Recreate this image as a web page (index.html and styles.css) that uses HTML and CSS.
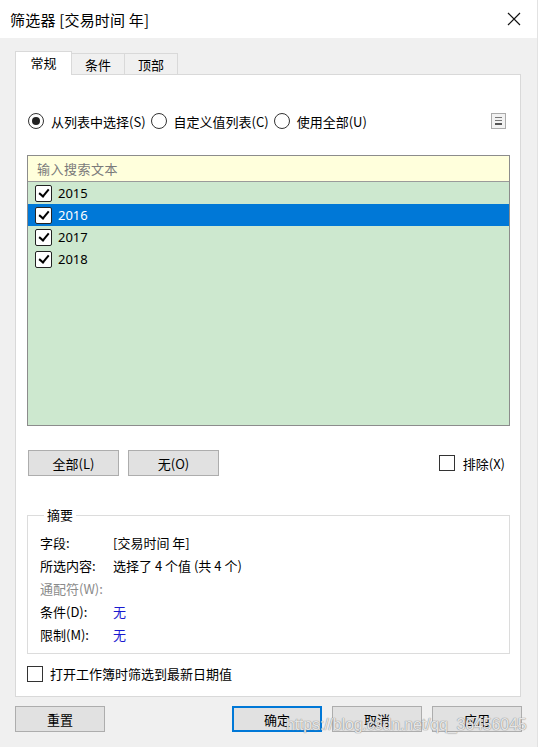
FILE: index.html
```html
<!DOCTYPE html>
<html>
<head>
<meta charset="utf-8">
<link rel="stylesheet" href="styles.css">
</head>
<body>
<div class="window">
  <div class="titlebar">
    <span class="title">筛选器 [交易时间 年]</span>
    <svg class="close" width="14" height="14" viewBox="0 0 14 14"><path d="M1 1 L13 13 M13 1 L1 13" stroke="#111" stroke-width="1.2" fill="none"/></svg>
  </div>
  <div class="main">
    <div class="tabs">
      <div class="tab active">常规</div>
      <div class="tab">条件</div>
      <div class="tab">顶部</div>
    </div>
    <div class="panel">
      <div class="radio-row">
        <label class="radio checked"><span class="dot"></span>从列表中选择(S)</label>
        <label class="radio"><span class="dot"></span>自定义值列表(C)</label>
        <label class="radio"><span class="dot"></span>使用全部(U)</label>
        <span class="menu-icon"><i></i><i></i><i></i></span>
      </div>
      <div class="listbox">
        <div class="search">输入搜索文本</div>
        <div class="items">
          <div class="item"><span class="cb on"></span>2015</div>
          <div class="item sel"><span class="cb on"></span>2016</div>
          <div class="item"><span class="cb on"></span>2017</div>
          <div class="item"><span class="cb on"></span>2018</div>
        </div>
      </div>
      <div class="btn-row">
        <button class="btn">全部(L)</button>
        <button class="btn">无(O)</button>
        <label class="exclude"><span class="box"></span>排除(X)</label>
      </div>
      <fieldset class="summary">
        <legend>摘要</legend>
        <div class="srow"><span class="lbl">字段:</span><span>[交易时间 年]</span></div>
        <div class="srow"><span class="lbl">所选内容:</span><span>选择了 4 个值 (共 4 个)</span></div>
        <div class="srow dim"><span class="lbl">通配符(W):</span><span></span></div>
        <div class="srow"><span class="lbl">条件(D):</span><span class="blue">无</span></div>
        <div class="srow"><span class="lbl">限制(M):</span><span class="blue">无</span></div>
      </fieldset>
      <label class="latest"><span class="box"></span>打开工作簿时筛选到最新日期值</label>
    </div>
    <div class="footer">
      <button class="btn">重置</button>
      <div class="right-btns">
        <button class="btn primary">确定</button>
        <button class="btn">取消</button>
        <button class="btn">应用</button>
      </div>
    </div>
  </div>
  <div class="watermark">https://blog.csdn.net/qq_36456045</div>
</div>
</body>
</html>
```
FILE: styles.css
```css
* { box-sizing: border-box; }
html, body { margin: 0; padding: 0; }
body {
  font-family: "Noto Sans CJK SC", "Noto Sans", sans-serif;
  font-size: 13px;
  color: #000;
  background: #f0f0f0;
}
.window {
  position: relative;
  width: 538px;
  height: 747px;
  background: #f0f0f0;
  border-right: 1px solid #e2e2e2;
  overflow: hidden;
}
.titlebar {
  height: 38px;
  background: #fff;
  display: flex;
  align-items: center;
  justify-content: space-between;
  padding: 0 16px 0 10px;
}
.title { font-size: 15px; letter-spacing: 0.2px; }
.close { display: block; }
.main { padding: 13px 0 0 15px; }
.tabs { display: flex; align-items: flex-end; height: 23px; }
.tab {
  height: 21px;
  width: 54px;
  border: 1px solid #d9d9d9;
  border-bottom: none;
  background: #f0f0f0;
  display: flex;
  align-items: center;
  justify-content: center;
  margin-left: -1px;
}
.tab.active {
  height: 24px;
  width: 57px;
  margin-left: 0;
  margin-bottom: -1px;
  background: #fff;
  position: relative;
  z-index: 1;
  padding-bottom: 2px;
}
.panel {
  width: 506px;
  height: 623px;
  background: #fff;
  border: 1px solid #d9d9d9;
  padding: 36px 11px 0 11px;
}
.radio-row {
  display: flex;
  align-items: center;
  height: 20px;
  padding-left: 1px;
}
.radio { display: flex; align-items: center; margin-right: 5px; }
.radio .dot {
  width: 16px; height: 16px;
  border: 1px solid #333;
  border-radius: 50%;
  margin-right: 7px;
  display: flex; align-items: center; justify-content: center;
}
.radio.checked .dot::after {
  content: "";
  width: 8px; height: 8px;
  border-radius: 50%;
  background: #222;
}
.menu-icon {
  margin-left: auto;
  margin-right: 3px;
  width: 15px; height: 16px;
  border: 1px solid #aaa;
  background: #f2f2f2;
  display: flex; flex-direction: column; justify-content: center; align-items: center;
  gap: 2px;
}
.menu-icon i { display: block; width: 7px; height: 1px; background: #777; }
.menu-icon i:last-child { height: 2px; background: #555; }
.listbox {
  margin-top: 24px;
  width: 483px;
  height: 271px;
  border: 1px solid #8c8c8c;
  background: #cde8cf;
}
.search {
  height: 26px;
  background: #ffffdc;
  border-bottom: 1px solid #9a9a9a;
  color: #7a7a7a;
  padding-left: 9px;
  display: flex; align-items: center;
  letter-spacing: 0.5px;
}
.item {
  height: 22px;
  display: flex; align-items: center;
  padding-left: 7px;
  font-family: "Noto Sans", sans-serif;
  font-size: 13px;
}
.item.sel { background: #0078d7; color: #fff; }
.cb {
  width: 17px; height: 17px;
  border: 1.5px solid #222;
  border-radius: 2px;
  background: #fff;
  margin-right: 6px;
  position: relative;
}
.item.sel .cb { background: #fff; }
.cb.on::after {
  content: "";
  position: absolute;
  left: 4.5px; top: 1px;
  width: 4px; height: 8px;
  border: solid #000;
  border-width: 0 2px 2px 0;
  transform: rotate(40deg);
}
.btn-row {
  margin-top: 24px;
  display: flex; align-items: center;
}
.btn {
  font: inherit;
  width: 91px; height: 26px;
  background: #e1e1e1;
  border: 1px solid #adadad;
  padding: 0;
  color: #000;
}
.btn-row .btn { margin-left: 1px; margin-right: 8px; }
.exclude {
  margin-left: auto;
  margin-right: 4px;
  display: flex; align-items: center;
}
.box {
  width: 16px; height: 16px;
  border: 1px solid #333;
  background: #fff;
  margin-right: 8px;
}
.summary {
  margin: 32px 0 0 0;
  width: 483px;
  height: 146px;
  border: 1px solid #dcdcdc;
  padding: 9px 0 0 12px;
}
.summary legend { padding: 0 3px; margin-left: 4px; line-height: 14px; }
.srow { display: flex; height: 23px; align-items: center; }
.srow .lbl { width: 73px; }
.dim { color: #8a8a8a; }
.blue { color: #1a1ad0; }
.latest {
  margin-top: 10px;
  display: flex; align-items: center;
}
.latest .box { margin-right: 7px; }
.footer {
  width: 507px;
  margin-top: 9px;
  display: flex;
  justify-content: space-between;
}
.footer .btn { width: 90px; height: 26px; }
.right-btns { display: flex; gap: 10px; }
.btn.primary { border: 2px solid #0078d7; }
.watermark {
  position: absolute;
  left: 286px; top: 716px;
  font-family: "Liberation Sans", sans-serif;
  font-size: 16px;
  letter-spacing: -0.15px;
  color: rgba(255,255,255,0.8);
  text-shadow: 0 0 1px #8a8a8a, 0 0 1px #8a8a8a;
  white-space: nowrap;
}
```
